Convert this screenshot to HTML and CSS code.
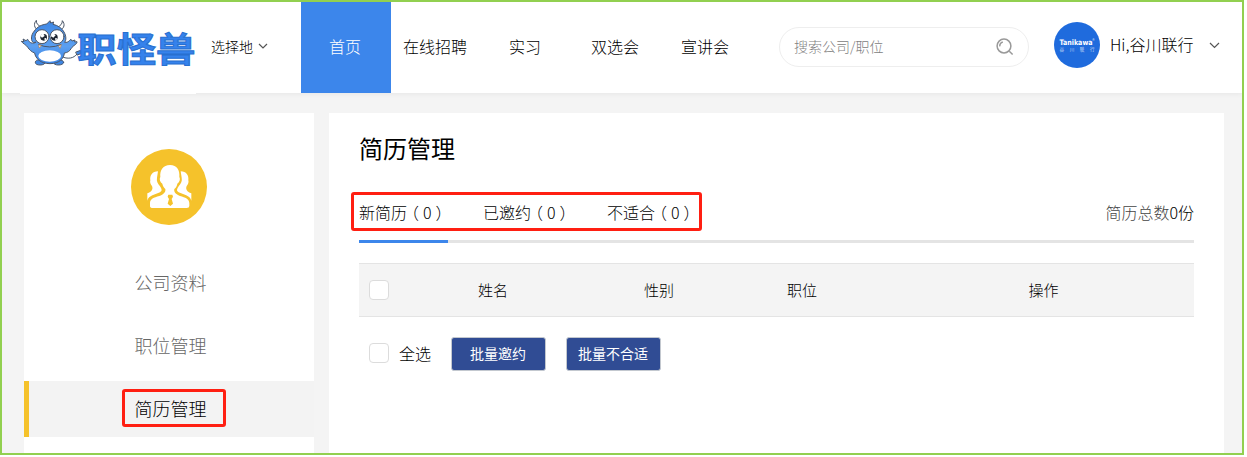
FILE: index.html
```html
<!DOCTYPE html>
<html lang="zh-CN">
<head>
  <meta charset="UTF-8">
  <meta name="viewport" content="width=device-width, initial-scale=1">
  <title>简历管理</title>
  <link rel="stylesheet" href="styles.css">
</head>
<body>

  <div class="page">
    <header class="header">
      <a class="logo">
        <svg width="178" height="60" viewBox="60 36 534 180">
          <defs>
            <linearGradient id="fur" x1="0" y1="0" x2="0" y2="1">
              <stop offset="0" stop-color="#3d86e4"/>
              <stop offset="0.6" stop-color="#5b9ff0"/>
              <stop offset="1" stop-color="#3a83e4"/>
            </linearGradient>
          </defs>
          <g stroke="#4c5768" stroke-width="3" stroke-linejoin="round" stroke-linecap="round">
            <path d="M188 170c18 8 36 6 46-8" fill="none"/>
            <path d="M231 156l14-5 3 9-13 5z" fill="#3d86e4"/>
            <ellipse cx="124" cy="187" rx="15" ry="8" fill="#3d86e4"/>
            <ellipse cx="179" cy="187" rx="15" ry="8" fill="#3d86e4"/>
            <path d="M117 91c-12-7-14-20-5-30 0 12 5 14 15 20z" fill="#fff"/>
            <path d="M184 91c12-7 15-18 6-29 0 11-5 14-15 20z" fill="#fff"/>
            <path d="M102 127c-6-4-8-20 4-34 9-13 22-19 37-21l10-10 2 7 9-3-2 7c15 3 27 12 33 23 7 12 7 25 2 31 5 0 9 1 14-5l5-4 3 5 9-3-1 6 7-1c1 8-12 11-17 20-5 9-12 13-21 14-1 16-15 32-43 32s-44-16-46-32c-9-3-16-10-20-16-4-8-17-13-20-19l8 1-3-8 9 5 5-4c6 12 15 14 24 9z" fill="url(#fur)"/>
            <path d="M119 134q33 14 66 0" fill="none"/>
            <path d="M119 135l2 9 6-7zM179 138l4 7 4-10z" fill="#fff" stroke="#b97b42" stroke-width="2"/>
            <circle cx="129" cy="110" r="21" fill="#fff"/>
            <circle cx="174" cy="110" r="21" fill="#fff"/>
          </g>
          <ellipse cx="152" cy="168" rx="34" ry="17" fill="#fff"/>
          <circle cx="134" cy="112" r="10" fill="#1d2530"/>
          <circle cx="166" cy="112" r="10" fill="#1d2530"/>
          <path d="M123 107l9-8 5 9-8 5zM155 108l7-9 8 7-7 7z" fill="#fff"/>
          <circle cx="139" cy="117" r="3" fill="#fff"/>
          <circle cx="171" cy="117" r="3" fill="#fff"/>
          <text class="logo-text" x="235" y="186" textLength="354" lengthAdjust="spacingAndGlyphs">职怪兽</text>
        </svg>
      </a>

      <div class="city">
        选择地
        <svg width="10" height="7" viewBox="0 0 10 7"><path d="M1 1l4 4 4-4"/></svg>
      </div>

      <nav class="nav">
        <a class="active">首页</a>
        <a>在线招聘</a>
        <a>实习</a>
        <a>双选会</a>
        <a>宣讲会</a>
      </nav>

      <div class="search">
        <span>搜索公司/职位</span>
        <svg width="18" height="18" viewBox="0 0 18 18">
          <circle cx="8" cy="8" r="6.9"/>
          <path d="M3.8 8.4a4.3 4.3 0 0 1 3-4.4M13.3 13.3l3.3 3.2"/>
        </svg>
      </div>

      <div class="user">
        <svg class="avatar" width="46" height="46" viewBox="0 0 46 46">
          <circle cx="23" cy="23" r="23"/>
          <text class="brand" x="5.5" y="22.5" textLength="33" lengthAdjust="spacingAndGlyphs">Tanikawa</text>
          <text class="mark" x="38.5" y="19.5">®</text>
          <text class="sub" x="5.5" y="28.5" textLength="35">谷川联行</text>
        </svg>
        <span>Hi,谷川联行</span>
        <svg class="arrow" width="11" height="7" viewBox="0 0 11 7"><path d="M1 1l4.5 4.5L10 1"/></svg>
      </div>
    </header>

    <div class="content">
      <aside class="sidebar">
        <svg class="sidebar-icon" width="76" height="76" viewBox="0 0 228 228">
          <circle cx="114" cy="114" r="114" fill="#f5c22b"/>
          <g fill="#fff">
            <path d="M81 67c-17 0-25 12-23 27-2 6 1 13 5 17 4 10-1 17-14 22v22c4-16 24-18 38-25 8-5 5-10 0-18-7-9-11-15-9-26z"/>
            <path d="M149 67c17 0 25 12 23 27 2 6-1 13-5 17-4 10 1 17 14 22v22c-4-16-24-18-38-25-8-5-5-10 0-18 7-9 11-15 9-26z"/>
            <path d="M117 48c-21 0-31 15-29 36-4 7 0 16 6 20 1 7 5 11 9 16 2 9-6 17-18 21-17 5-28 8-28 22v8q0 6 9 6h101q8 0 8-6v-8c0-14-12-17-28-22-13-5-19-12-17-21 5-5 8-9 9-16 6-4 10-13 6-20 2-21-7-36-28-36z"/>
          </g>
          <path d="M112 137h12l2 6-4 7 4 14-8 7-8-7 4-14-4-7z" fill="#f5c22b"/>
        </svg>
        <ul class="menu">
          <li>公司资料</li>
          <li>职位管理</li>
          <li class="active"><span class="menu-text">简历管理<i class="mark-box mark-menu"></i></span></li>
        </ul>
      </aside>

      <main class="main">
        <h2>简历管理</h2>

        <div class="tabs">
          <div class="tab active">新简历<span class="count">（<b>0</b>）</span></div>
          <div class="tab">已邀约<span class="count">（<b>0</b>）</span></div>
          <div class="tab">不适合<span class="count">（<b>0</b>）</span></div>
          <div class="total">简历总数<b>0份</b></div>
          <i class="mark-box mark-tabs"></i>
        </div>

        <div class="table-head">
          <i class="checkbox"></i>
          <span>姓名</span>
          <span>性别</span>
          <span>职位</span>
          <span class="action">操作</span>
        </div>

        <div class="batch">
          <i class="checkbox"></i>
          <label>全选</label>
          <button type="button">批量邀约</button>
          <button type="button">批量不合适</button>
        </div>
      </main>
    </div>
  </div>

</body>
</html>
```
FILE: styles.css
```css
* {
  box-sizing: border-box;
}

body {
  margin: 0;
  background-color: #fff;
  font-family: "Noto Sans CJK SC", sans-serif;
  font-weight: 300;
  color: #000;
}

.page {
  width: 1244px;
  height: 455px;
  border: 2px solid #92d050;
  background-color: #f4f4f4;
  overflow: hidden;
}

svg {
  display: block;
  flex: none;
}

.header {
  display: flex;
  align-items: center;
  height: 91px;
  padding-left: 18px;
  background-color: #fff;
  box-shadow: 0 1px 5px rgba(0,0,0,0.06);
}

.logo {
  width: 176px;
  height: 92px;
  padding-top: 10px;
  align-self: flex-start;
  background-color: #fff;
}

.logo svg {
  margin-left: -1px;
  overflow: visible;
}

.logo-text {
  font-size: 104px;
  font-weight: bold;
  fill: #3582ec;
  stroke: #286fd0;
  stroke-width: 3px;
}

.city {
  display: flex;
  align-items: center;
  gap: 5px;
  width: 90px;
  margin-left: 15px;
  padding-bottom: 3px;
  font-size: 14px;
}

.city path,
.arrow path {
  fill: none;
  stroke: #555;
  stroke-width: 1.2;
}

.nav {
  display: flex;
}

.nav a {
  width: 90px;
  line-height: 88px;
  height: 91px;
  padding-right: 2px;
  text-align: center;
  font-size: 16px;
}

.nav .active {
  background-color: #3c86eb;
  color: #fff;
}

.search {
  display: flex;
  align-items: center;
  justify-content: space-between;
  width: 250px;
  height: 40px;
  margin: -1px 0 0 28px;
  padding: 0 14px 0 15px;
  border: 1px solid #eee;
  border-radius: 20px;
  font-size: 14px;
  color: #808080;
}

.search span {
  margin: -2px 0 0 -1px;
}

.search svg {
  fill: none;
  stroke: #999;
  stroke-width: 1.5;
}

.user {
  display: flex;
  align-items: center;
  margin: -5px 0 0 25px;
  font-size: 16px;
}

.user span {
  width: 99px;
  margin: -2px 0 0 10px;
  white-space: nowrap;
}

.avatar circle {
  fill: #1f6bdd;
}

.avatar text {
  fill: #fff;
}

.brand {
  font: bold 7.5px "DejaVu Sans", sans-serif;
}

.mark {
  font-size: 4px;
}

.sub {
  font-size: 4.5px;
}

.content {
  display: flex;
  gap: 15px;
  height: 360px;
  padding: 20px 18px 0 22px;
}

.sidebar {
  width: 290px;
  padding-top: 36px;
  background-color: #fff;
}

.sidebar-icon {
  margin: 0 auto;
}

.menu {
  list-style: none;
  margin: 30px 0 0;
  padding: 0;
}

.menu li {
  height: 56px;
  line-height: 54px;
  margin-bottom: 7px;
  padding-right: 2px;
  border-left: 5px solid transparent;
  text-align: center;
  font-size: 18px;
  color: #666;
}

.menu .active {
  border-left-color: #f5c22b;
  background-color: #f3f3f3;
  color: #000;
}

.menu-text {
  display: inline-block;
  position: relative;
}

.mark-box {
  position: absolute;
  border: 3px solid #ff1f12;
  border-radius: 3px;
}

.mark-menu {
  left: -13px;
  top: 8px;
  width: 104px;
  height: 38px;
}

.main {
  flex: 1;
  padding: 0 30px;
  background-color: #fff;
}

h2 {
  margin: 0;
  height: 72px;
  line-height: 69px;
  font-size: 24px;
  font-weight: 400;
}

.tabs {
  display: flex;
  gap: 35px;
  position: relative;
  height: 58px;
  line-height: 55px;
  border-bottom: 3px solid #e4e4e4;
  font-size: 16px;
}

.tab {
  width: 89px;
  height: 58px;
  white-space: nowrap;
}

.tab.active {
  border-bottom: 3px solid #3c86eb;
}

.count {
  margin-left: -4px;
}

.count b {
  margin: 0 4px;
  font-weight: inherit;
}

.mark-tabs {
  left: -8px;
  top: 7px;
  width: 351px;
  height: 39px;
}

.total {
  margin-left: auto;
  color: #444;
}

.total b {
  font-weight: inherit;
  color: #000;
}

.table-head {
  display: grid;
  grid-template-columns: 20px 208px 124px 162px 1fr;
  align-items: center;
  height: 54px;
  margin-top: 20px;
  padding-left: 10px;
  border-top: 1px solid #e4e4e4;
  border-bottom: 1px solid #e4e4e4;
  background-color: #f4f4f4;
  font-size: 15px;
  text-align: center;
}

.table-head span {
  padding-bottom: 2px;
}

.table-head .action {
  padding-left: 10px;
}

.checkbox {
  width: 20px;
  height: 20px;
  border: 1px solid #dcdcdc;
  border-radius: 4px;
  background-color: #fff;
}

.batch {
  display: flex;
  align-items: center;
  margin-top: 20px;
  padding-left: 10px;
  font-size: 16px;
}

.batch .checkbox {
  margin-top: -2px;
}

.batch label {
  width: 52px;
  margin: -3px 0 0 10px;
}

.batch button {
  width: 95px;
  height: 34px;
  margin-right: 20px;
  padding: 0 1px 2px 0;
  border: 1px solid #c3c8cf;
  border-radius: 3px;
  background-color: #304c94;
  color: #fff;
  font-family: inherit;
  font-size: 14px;
}
```
